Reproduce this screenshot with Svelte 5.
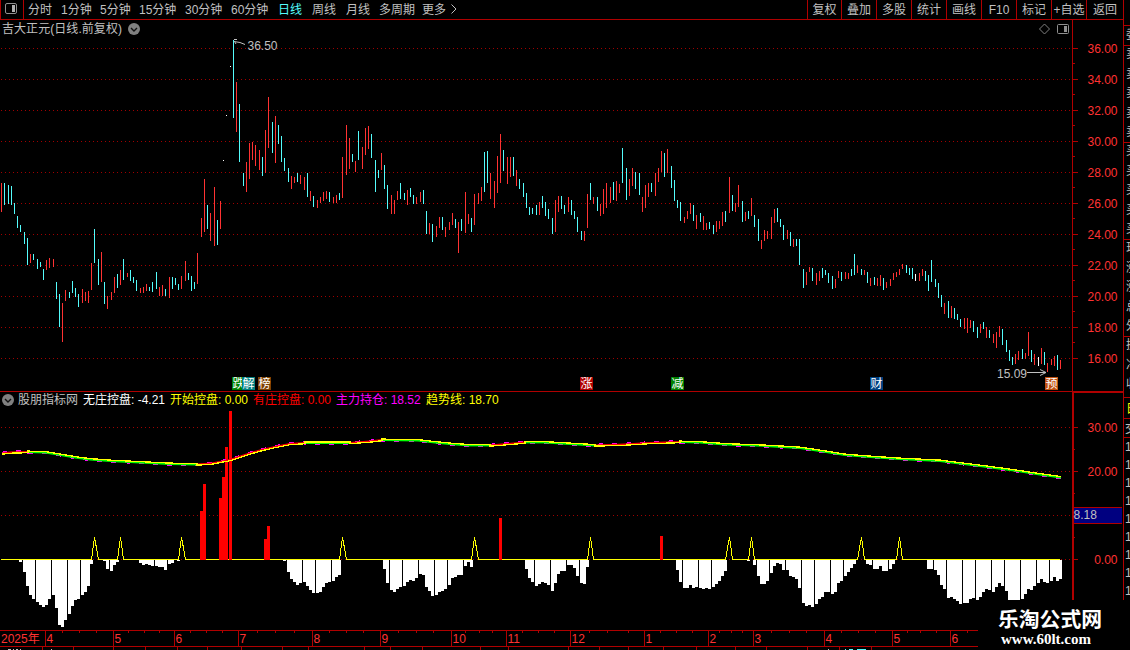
<script lang="ts">
  const periods = ["分时", "1分钟", "5分钟", "15分钟", "30分钟", "60分钟", "日线", "周线", "月线", "多周期", "更多"];
  const tools = ["复权", "叠加", "多股", "统计", "画线", "F10", "标记", "+自选", "返回"];

  const legend = [
    { label: "无庄控盘", value: "-4.21", color: "white" },
    { label: "开始控盘", value: "0.00", color: "yellow" },
    { label: "有庄控盘", value: "0.00", color: "red" },
    { label: "主力持仓", value: "18.52", color: "magenta" },
    { label: "趋势线", value: "18.70", color: "yellow" },
  ];

  // kind (u = up, d = down, f = flat), x, top, bottom
  const bars = `u 1 183 212,d 4 183 205,d 8 185 204,d 11 186 205,d 14 203 214,d 17 216 228,d 20 225 232,d 24 232 244,d 27 238 265,u 30 254 263,
d 33 254 260,d 37 259 269,d 40 262 267,d 43 269 280,u 46 260 270,u 49 258 268,u 53 259 267,d 56 282 299,d 59 294 327,u 62 303 342,
u 65 290 301,d 69 292 298,d 72 281 293,d 75 288 297,d 78 294 307,u 82 289 303,u 85 292 301,u 88 291 303,u 91 263 290,d 94 229 263,
d 98 259 285,u 101 252 282,d 104 282 304,u 107 296 309,u 111 292 300,u 114 277 293,d 117 274 288,u 120 270 285,d 123 259 280,u 127 273 277,
d 130 270 281,d 133 277 283,d 136 280 291,u 140 288 293,u 143 287 293,u 146 284 291,d 149 287 291,d 152 282 292,d 156 272 289,u 159 287 296,
u 162 285 296,d 165 289 296,u 169 277 298,d 172 277 289,d 175 278 285,d 178 284 290,u 181 276 289,u 185 261 281,d 188 273 280,d 191 276 291,
d 194 282 289,u 197 253 284,u 201 218 237,u 204 179 232,d 207 205 229,u 210 213 241,u 214 187 246,d 217 220 245,u 220 201 229,f 223 160 161,
f 226 115 116,f 230 66 67,d 233 40 118,u 236 82 132,d 239 104 162,d 243 173 186,u 246 162 192,u 249 143 179,u 252 142 160,u 255 145 166,
u 259 150 170,d 262 157 176,u 265 130 173,u 268 97 148,d 272 122 153,u 275 116 163,d 278 125 144,d 281 136 162,d 284 158 171,d 288 168 182,
u 291 176 189,u 294 177 183,d 297 173 182,u 300 175 184,u 304 177 190,d 307 173 197,u 310 191 201,d 313 196 207,u 317 200 208,u 320 197 203,
u 323 192 201,u 326 191 199,d 329 192 202,u 333 197 203,u 336 195 203,d 339 193 200,u 342 157 198,u 346 125 175,u 349 138 169,d 352 154 162,
u 355 161 172,d 358 131 160,u 362 147 169,u 365 128 155,u 368 126 149,d 371 134 158,d 375 160 192,d 378 170 178,u 381 153 170,d 384 165 189,
d 387 185 209,u 391 195 214,u 394 200 214,u 397 191 200,d 400 183 199,d 404 193 200,u 407 190 205,d 410 188 197,d 413 195 204,u 416 197 204,
u 420 192 202,d 423 190 204,d 426 211 234,u 429 223 234,d 432 224 242,u 436 226 237,u 439 217 228,d 442 217 230,u 445 227 237,u 449 222 230,
u 452 213 225,d 455 219 228,u 458 222 253,d 461 219 231,u 465 192 233,u 468 214 224,d 471 218 232,u 474 194 225,u 478 193 204,u 481 187 201,
d 484 152 192,d 487 151 183,u 490 173 199,u 494 181 208,u 497 156 193,u 500 134 183,d 503 150 171,u 507 157 184,u 510 157 177,d 513 157 176,
u 516 170 186,d 519 179 189,d 523 183 197,d 526 193 208,d 529 207 215,d 532 208 214,d 536 205 215,u 539 202 215,d 542 196 208,d 545 202 216,
d 548 209 219,d 552 218 234,u 555 200 232,u 558 196 212,d 561 196 209,d 564 205 214,u 568 197 212,d 571 200 215,d 574 211 219,d 577 217 232,
d 581 231 240,u 584 231 241,u 587 194 228,d 590 183 200,u 593 197 204,d 597 197 211,u 600 204 216,u 603 189 214,u 606 183 208,u 610 187 203,
d 613 182 200,u 616 181 201,u 619 184 193,d 622 148 183,d 626 168 200,u 629 179 196,u 632 168 186,d 635 172 189,d 639 173 195,u 642 197 212,
u 645 185 208,u 648 183 197,d 651 183 192,u 655 173 196,u 658 168 182,u 661 151 172,d 664 153 177,u 667 149 173,d 671 166 188,d 674 180 201,
d 677 200 208,d 680 202 221,u 684 217 223,u 687 211 219,u 690 203 214,d 693 205 221,u 696 215 229,d 700 213 222,u 703 216 230,u 706 223 230,
d 709 222 229,d 713 225 234,u 716 221 232,u 719 221 229,u 722 212 226,d 725 211 222,u 729 177 213,d 732 195 211,u 735 203 212,u 738 185 207,
d 742 201 222,u 745 212 221,d 748 211 219,u 751 198 216,d 754 215 227,d 758 219 241,u 761 240 249,u 764 230 241,u 767 231 239,u 771 217 239,
u 774 209 223,d 777 208 222,d 780 219 227,d 783 225 240,u 787 230 239,d 790 232 246,u 793 239 247,d 796 239 246,d 799 239 265,d 803 269 288,
u 806 272 285,u 809 267 272,d 812 268 281,u 816 273 285,u 819 271 281,d 822 268 278,d 825 270 275,d 828 273 283,d 832 276 289,u 835 279 288,
u 838 271 278,d 841 272 281,u 845 272 279,u 848 273 279,d 851 269 276,d 854 254 275,u 857 265 273,d 861 269 275,u 864 270 275,d 867 272 283,
u 870 278 286,d 874 277 285,u 877 278 286,u 880 275 286,d 883 278 290,u 886 282 288,u 890 279 286,u 893 273 280,u 896 272 277,u 899 269 275,
u 902 264 269,d 906 265 273,d 909 268 275,d 912 268 279,f 915 274 281,u 919 273 281,u 922 269 276,d 925 271 281,d 928 275 291,d 931 260 282,
d 935 279 287,d 938 283 298,d 941 295 307,u 944 303 314,d 948 301 318,u 951 306 318,d 954 308 319,d 957 314 320,d 960 319 327,u 964 318 329,
u 967 318 333,u 970 320 328,d 973 321 332,d 977 327 338,u 980 324 333,d 983 322 329,u 986 327 338,d 989 330 338,u 993 334 343,u 996 332 348,
u 999 326 337,d 1002 329 345,d 1006 340 352,d 1009 350 361,d 1012 357 365,u 1015 354 364,u 1018 351 360,d 1022 349 359,u 1025 353 359,u 1028 332 356,
d 1031 350 362,u 1034 354 365,f 1038 357 366,u 1041 348 364,d 1044 352 365,u 1047 363 372,u 1051 359 365,u 1054 356 366,d 1057 355 370,u 1060 360 369`
    .split(",")
    .map((row) => row.trim().split(" "));

  const barPath = (kind: string) =>
    bars
      .filter((b) => b[0] === kind)
      .map(([, x, top, bottom]) => `M${x} ${top}h1V${bottom}h-1z`)
      .join("");

  // x and bottom edge of every bar below zero
  const below = `20 562,24 572,27 586,30 595,33 599,37 602,40 605,43 607,46 605,49 599,53 595,56 608,59 625,62 627,65 620,69 614,72 606,75 600,
78 599,82 595,85 592,88 586,91 564,104 561,107 569,111 571,114 565,117 562,140 563,143 565,146 564,149 565,152 566,156 566,159 567,162 567,
165 570,169 564,172 563,178 561,284 561,288 572,291 579,294 582,297 585,300 583,304 582,307 586,310 590,313 593,317 593,320 592,323 587,
326 583,329 582,333 581,336 577,339 575,384 569,387 583,391 590,394 592,397 589,400 587,404 586,407 582,410 580,413 581,416 578,420 574,
423 575,426 587,429 591,432 596,436 595,439 592,442 591,445 589,449 585,452 578,455 577,458 575,461 575,465 566,468 562,471 567,526 569,
529 578,532 582,536 586,539 584,542 582,545 583,548 585,552 591,555 583,558 574,561 571,564 571,568 565,571 565,574 568,577 576,581 583,
584 584,587 567,677 570,680 582,684 588,687 588,690 585,693 588,696 587,700 588,703 589,706 588,709 589,713 587,716 584,719 581,722 576,
725 571,748 561,754 565,758 576,761 584,764 584,767 581,771 573,774 566,777 563,780 564,783 570,787 570,790 576,793 577,796 579,799 588,
803 603,806 606,809 605,812 607,816 604,819 599,822 597,825 592,828 592,832 594,835 592,838 583,841 581,845 576,848 572,851 568,854 564,
867 564,870 565,874 569,877 569,880 566,883 571,886 571,890 569,893 564,928 569,931 569,935 570,938 575,941 585,944 589,948 598,951 597,
954 599,957 601,960 604,964 603,967 603,970 599,973 598,977 600,980 597,983 592,986 589,989 590,993 592,996 587,999 583,1002 586,1006 591,
1009 600,1012 600,1015 600,1018 600,1022 599,1025 594,1028 589,1031 590,1034 586,1038 583,1041 579,1044 582,1047 583,1051 581,1054 577,
1057 581,1060 579`
    .split(",")
    .map((row) => row.trim().split(" ").map(Number));
  const belowPath = below.map(([x, y]) => `M${x - 1} 560h3V${y}h-3z`).join("");

  const above = [
    [201, 511], [204, 484], [220, 498], [223, 477], [226, 447],
    [230, 411], [265, 539], [268, 526], [500, 518], [661, 536],
  ];

  const spikes = [
    [91, 94, 98], [117, 120, 123], [178, 181, 185], [339, 342, 346], [471, 474, 478],
    [587, 590, 593], [725, 729, 732], [748, 751, 754], [857, 861, 864], [896, 899, 902],
  ];
  const signalLine =
    "M1 559.5" + spikes.map(([a, b, c]) => `L${a + 0.5} 559.5L${b + 0.5} 537L${c + 0.5} 559.5`).join("") + "L1060 559.5";

  const trend = [
    [2, 453], [10, 452], [28, 451.5], [45, 452], [58, 454], [75, 457], [90, 459], [110, 460.5], [130, 461.5], [150, 462.5],
    [170, 463.5], [197, 464], [212, 463], [230, 459.5], [245, 454.5], [260, 450], [275, 446.5], [290, 443.5], [305, 442.5], [350, 442.5],
    [370, 441], [382, 439.5], [418, 440], [435, 442], [450, 443.5], [470, 445], [490, 445], [508, 443.5], [525, 442], [545, 442],
    [570, 443.5], [595, 445], [625, 444], [650, 442.5], [680, 441.5], [700, 442], [725, 444], [765, 445.5], [800, 447.5], [820, 450.5],
    [845, 454.5], [870, 456.5], [900, 458.5], [940, 460.5], [960, 463], [980, 465.5], [1010, 469.5], [1040, 474], [1061, 477],
  ];
  const segments = trend.slice(1).map(([x2, y2], i) => {
    const [x1, y1] = trend[i];
    return { x1, y1, x2, y2, rising: y2 < y1 };
  });
  const lineOf = (shift: number) =>
    segments.map((s) => `${s.x1},${s.y1 + (s.rising ? -shift : shift)} ${s.x2},${s.y2 + (s.rising ? -shift : shift)}`).join(" ");

  const prices = Array.from({ length: 11 }, (_, i) => ({ y: 48 + i * 31, label: (36 - i * 2).toFixed(2) }));

  const levels = [
    { y: 427, label: "30.00" },
    { y: 471, label: "20.00" },
    { y: 515, label: "" },
    { y: 559, label: "0.00" },
  ];

  const events = [
    { x: 232, text: "跌", fill: "#008000" },
    { x: 242, text: "解", fill: "#008080" },
    { x: 258, text: "榜", fill: "#804000" },
    { x: 580, text: "涨", fill: "#b00000" },
    { x: 671, text: "减", fill: "#008000" },
    { x: 870, text: "财", fill: "#004080" },
    { x: 1045, text: "预", fill: "#c05010" },
  ];

  const months = [
    [45, "4"], [113, "5"], [174, "6"], [238, "7"], [312, "8"], [380, "9"], [451, "10"], [506, "11"],
    [570, "12"], [644, "1"], [708, "2"], [753, "3"], [824, "4"], [892, "5"], [950, "6"],
  ] as [number, string][];
  const weeks = [
    62, 79, 96, 128, 144, 159, 190, 206, 222, 257, 275, 294, 329, 346, 363, 398, 416, 433, 465, 479, 492, 522, 538,
    554, 589, 607, 628, 660, 676, 692, 719, 731, 742, 771, 789, 806, 841, 858, 875, 907, 920, 936, 967,
  ];
  const tabs = [42, 73, 113, 145, 177, 207, 241, 282, 308, 364, 390, 422, 480, 508, 568, 599, 628, 663, 696, 735, 766, 807, 839, 871];

  const quotes = ["委", "卖", "卖", "卖", "卖", "卖", "买", "买", "买", "买", "买", "现", "涨", "涨", "总", "外", "换", "净", "收"];
  const ticks = [447, 465, 483, 501, 519, 537, 555, 573, 591];
</script>

<div class="terminal">
  <div class="main">
    <header>
      <div class="toggle">
        <svg width="14" height="13" viewBox="0 0 14 13">
          <rect x="1.5" y="1.5" width="11" height="10" rx="1.5" fill="none" stroke="#909090" />
          <rect x="8" y="3" width="3" height="7" fill="#b0b0b0" />
        </svg>
      </div>
      <nav class="periods">
        {#each periods as period}
          <span class:active={period === "日线"}>{period}</span>
        {/each}
        <svg width="8" height="12" viewBox="0 0 8 12">
          <path d="M1.5 0.5L6 5L1.5 9.5" fill="none" stroke="#c0c0c0" />
        </svg>
      </nav>
      <nav class="tools">
        {#each tools as tool}
          <span>{tool}</span>
        {/each}
      </nav>
    </header>

    <div class="row title">
      <div class="row__body">
        <span>吉大正元(日线.前复权)</span>
        <svg width="12" height="12" viewBox="0 0 12 12">
          <circle cx="6" cy="6" r="6" fill="#808080" />
          <path d="M3 5L6 8L9 5" fill="none" stroke="#101010" stroke-width="1.4" />
        </svg>
        <svg class="push" width="30" height="12" viewBox="0 0 30 12">
          <path d="M5.5 1L10.5 6L5.5 11L0.5 6z" fill="none" stroke="#808080" />
          <rect x="18.5" y="1.5" width="11" height="9" rx="1" fill="none" stroke="#909090" />
          <rect x="25" y="3" width="3" height="6" fill="#909090" />
        </svg>
      </div>
      <div class="row__axis"></div>
    </div>

    <svg class="chart" width="1123" height="353" viewBox="0 38 1123 353">
      {#each prices as { y, label }}
        <path class="grid" d="M1 {y + 0.5}H1072" />
        <rect class="rule" x="1073" {y} width="5" height="1" />
        {#if y < 358}
          <rect class="rule" x="1073" y={y + 15} width="2" height="1" />
        {/if}
        <text class="scale" x="1117.5" y={y + 5}>{label}</text>
      {/each}
      <rect class="rule" x="1072" y="38" width="1" height="353" />

      <path class="up" d={barPath("u")} />
      <path class="down" d={barPath("d")} />
      <path class="flat" d={barPath("f")} />

      <path class="arrow" d="M234 41.5L237 42L240 42.5L245 44.5M234 39.5H237M234.5 41.5L236 44" />
      <text x="247.5" y="50">36.50</text>
      <path class="arrow" d="M1027 372.5H1046M1040 369.5L1046 372.5L1040 375.5" />
      <text x="997" y="378">15.09</text>

      {#each events as { x, text, fill }}
        <rect {x} y="377" width="13" height="13" {fill} />
        <text class="event" x={x + 0.5} y="388">{text}</text>
      {/each}
    </svg>

    <div class="row legend">
      <div class="row__body">
        <svg width="12" height="12" viewBox="0 0 12 12">
          <circle cx="6" cy="6" r="6" fill="#808080" />
          <path d="M3 5L6 8L9 5" fill="none" stroke="#101010" stroke-width="1.4" />
        </svg>
        <span>股朋指标网</span>
        {#each legend as { label, value, color }}
          <span class={color}>{label}: {value}</span>
        {/each}
      </div>
      <div class="row__axis"></div>
    </div>

    <svg class="chart" width="1123" height="220" viewBox="0 410 1123 220">
      {#each levels as { y, label }}
        <path class="grid" d="M1 {y + 0.5}H1072" />
        <rect class="rule" x="1074" {y} width="4" height="1" />
        {#if y < 559}
          <rect class="rule" x="1074" y={y + 22} width="1" height="1" />
        {/if}
        <text class="scale" x="1117.5" y={y + 5}>{label}</text>
      {/each}

      <path class="flat" d={belowPath} />
      <path class="signal" d={signalLine} />
      {#each above as [x, y]}
        <rect x={x - 1} {y} width="3" height={560 - y} fill="#ff0000" />
      {/each}

      <g transform="translate(0 0.4)">
        <polyline class="holding" points={lineOf(1)} />
        {#each segments as s}
          <path d="M{s.x1} {s.y1}L{s.x2} {s.y2}" stroke={s.rising ? "#ff0000" : "#00ff00"} stroke-width="2" />
        {/each}
        <polyline class="trend" points={lineOf(-0.8)} />
      </g>

      <rect class="rule" x="1072" y="410" width="2" height="190" />
      <rect x="1074" y="507" width="48" height="17" fill="#000080" />
      <rect class="rule" x="1074" y="507" width="48" height="1" />
      <rect class="rule" x="1074" y="523" width="48" height="1" />
      <text x="1073.5" y="519">8.18</text>
    </svg>

    <svg class="chart" width="1123" height="20" viewBox="0 630 1123 20">
      <rect class="rule" x="0" y="630" width="978" height="1" />
      <rect class="rule" x="0" y="646" width="978" height="1" />
      <text class="month" x="1" y="643">2025年</text>
      {#each months as [x, label]}
        <rect class="rule" {x} y="631" width="1" height="15" />
        <text class="month" x={x + 1.5} y="643">{label}</text>
      {/each}
      {#each weeks as x}
        <rect class="rule" {x} y="631" width="1" height="2" />
      {/each}
      {#each tabs as x}
        <rect class="rule" {x} y="647" width="1" height="3" />
      {/each}
      <path d="M8 649h3v1h-3zM13 649h1v1h-1zM16 649h2v1h-2zM20 649h1v1h-1zM51 649h1v1h-1zM828 649h1v1h-1z" fill="#c0c0c0" />
      <path d="M845 649h1v1h-1zM849 649h4v1h-4zM857 649h9v1h-9z" fill="#54fcfc" />
    </svg>
  </div>

  <svg class="side" width="7" height="650" viewBox="1123 0 7 650">
    <rect class="rule" x="1123" y="0" width="1" height="391" />
    <rect class="rule" x="1122" y="391" width="2" height="209" />
    {#each [25, 45, 142, 239, 336, 397, 418, 437] as y}
      <rect class="rule" x="1124" {y} width="6" height="1" />
    {/each}
    {#each quotes as char, i}
      <text x="1126" y={39 + i * 19.4}>{char}</text>
    {/each}
    <text x="1126" y="413" class="day">日</text>
    <text x="1125" y="433">交</text>
    {#each ticks as y}
      <text x="1125" y={y + 4}>1</text>
    {/each}
  </svg>

  <div class="watermark">
    <strong>乐淘公式网</strong>
    <b>www.60lt.com</b>
  </div>
</div>

<style>
  :global(body) {
    background: #000;
    overflow: hidden;
  }

  .terminal {
    --line: #b00000;
    --text: #c0c0c0;
    position: relative;
    display: flex;
    width: 1130px;
    height: 650px;
    overflow: hidden;
    background: #000;
    color: var(--text);
    font-family: "Liberation Sans", "Noto Sans CJK SC", sans-serif;
    font-size: 12px;
    line-height: 18px;
    white-space: nowrap;
  }

  svg {
    display: block;
    flex: none;
  }

  .main {
    width: 1123px;
    flex: none;
  }

  header {
    display: flex;
    box-sizing: border-box;
    height: 20px;
    border-bottom: 1px solid var(--line);
    border-left: 1px solid var(--line);
  }

  .toggle {
    box-sizing: border-box;
    width: 23px;
    padding: 2px 0 0 3px;
    border-right: 1px solid var(--line);
  }

  .periods {
    display: grid;
    grid-template-columns: 33px 39px 39px 46px 46px 47px 34px 34px 33px 43px 28px 8px;
    align-items: center;
    padding-left: 4px;
  }

  .active {
    color: #54fcfc;
  }

  .tools {
    display: grid;
    grid-template-columns: 34px 35px 35px 35px 35px 35px 35px 35px 37px;
    margin-left: auto;
    line-height: 20px;
    text-align: center;
  }

  .tools span {
    height: 19px;
    border-left: 1px solid var(--line);
  }

  .row {
    display: flex;
    height: 18px;
  }

  .row__body {
    display: flex;
    align-items: center;
    box-sizing: border-box;
    width: 1072px;
    padding-left: 2px;
  }

  .row__axis {
    box-sizing: border-box;
    width: 51px;
    border-left: 1px solid var(--line);
  }

  .title .row__body {
    gap: 6px;
    padding-right: 3px;
    line-height: 20px;
  }

  .title span {
    letter-spacing: 0.06px;
  }

  .push {
    margin-left: auto;
  }

  .legend {
    height: 19px;
    box-sizing: border-box;
    border-top: 1px solid var(--line);
  }

  .legend .row__body {
    display: grid;
    grid-template-columns: 16px 65px 87px 83px 83px 90px auto;
    padding-bottom: 2px;
    line-height: 16px;
  }

  .legend .row__axis {
    border-left-width: 2px;
    border-top: 1px solid var(--line);
  }

  .white {
    color: #fff;
  }

  .yellow {
    color: #ffff00;
  }

  .red {
    color: #ff0000;
  }

  .magenta {
    color: #ff00ff;
  }

  text {
    fill: var(--text);
  }

  .rule {
    fill: var(--line);
  }

  .grid {
    stroke: #a00000;
    stroke-dasharray: 1 3;
  }

  .scale {
    fill: #ff3232;
    text-anchor: end;
  }

  .month {
    fill: #ff3232;
  }

  .up {
    fill: #ff3232;
  }

  .down {
    fill: #54fcfc;
  }

  .flat {
    fill: #fff;
  }

  .arrow {
    fill: none;
    stroke: var(--text);
  }

  .event {
    fill: #fff;
  }

  .signal,
  .trend,
  .holding {
    fill: none;
    stroke: #ffff00;
    shape-rendering: crispEdges;
  }

  .trend {
    stroke-width: 1.3;
  }

  .holding {
    stroke: #ff00ff;
    stroke-width: 1.5;
    stroke-dasharray: 5 9;
  }

  .day {
    fill: #ffff00;
  }

  .watermark {
    position: absolute;
    left: 978px;
    top: 600px;
    display: flex;
    flex-direction: column;
    box-sizing: border-box;
    width: 145px;
    height: 50px;
    padding: 7px 0 0 20px;
    color: #fff;
  }

  .watermark strong {
    font-size: 20.8px;
    line-height: 25px;
  }

  .watermark b {
    padding-left: 3px;
    font-family: "Liberation Serif", serif;
    font-size: 15px;
    line-height: 15px;
  }
</style>
